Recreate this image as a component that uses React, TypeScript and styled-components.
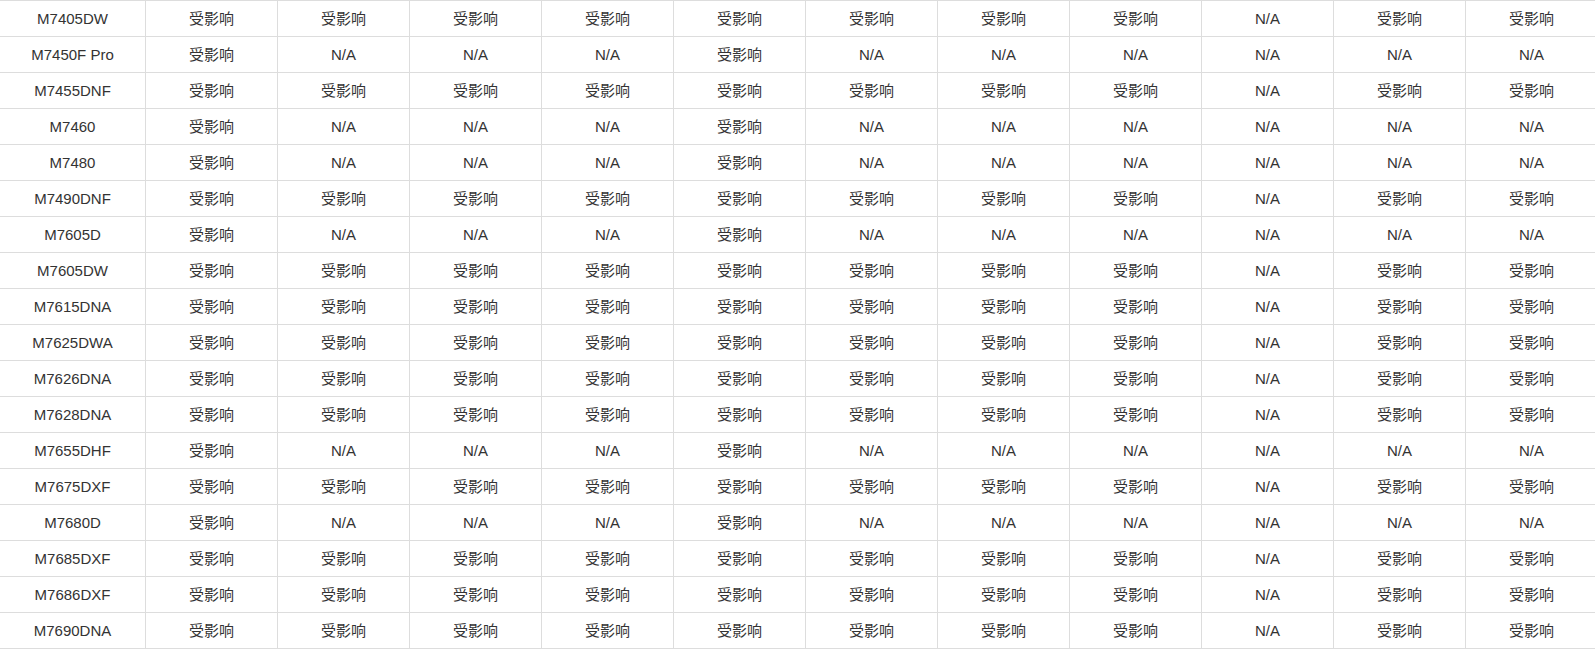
import React from "react";
import styled, { createGlobalStyle } from "styled-components";

const GlobalStyle = createGlobalStyle`
  html, body {
    margin: 0;
    padding: 0;
    background: #ffffff;
    overflow: hidden;
  }
  body {
    font-family: "Liberation Sans", Arial, "Noto Sans CJK SC", sans-serif;
  }
`;

const Table = styled.div`
  display: flex;
  flex-direction: column;
  width: 1598px;
  border-top: 1px solid #dddddd;
`;

const Row = styled.div`
  display: grid;
  grid-template-columns: 146px repeat(11, 132px);
`;

const Cell = styled.div<{ $model?: boolean }>`
  box-sizing: border-box;
  height: 36px;
  border-right: 1px solid #dddddd;
  border-bottom: 1px solid #dddddd;
  display: flex;
  align-items: center;
  justify-content: center;
  font-size: 15px;
  line-height: 20px;
  color: #333333;
  font-family: "Liberation Sans", Arial, "Noto Sans CJK SC", sans-serif;
  white-space: nowrap;
  padding-bottom: 0;
`;

const Y = "受影响";
const N = "N/A";
const A = [Y, Y, Y, Y, Y, Y, Y, Y, N, Y, Y];
const B = [Y, N, N, N, Y, N, N, N, N, N, N];

const rows: [string, string[]][] = [
  ["M7405DW", A],
  ["M7450F Pro", B],
  ["M7455DNF", A],
  ["M7460", B],
  ["M7480", B],
  ["M7490DNF", A],
  ["M7605D", B],
  ["M7605DW", A],
  ["M7615DNA", A],
  ["M7625DWA", A],
  ["M7626DNA", A],
  ["M7628DNA", A],
  ["M7655DHF", B],
  ["M7675DXF", A],
  ["M7680D", B],
  ["M7685DXF", A],
  ["M7686DXF", A],
  ["M7690DNA", A],
];

export default function App() {
  return (
    <>
      <GlobalStyle />
      <Table>
        {rows.map(([model, vals]) => (
          <Row key={model}>
            <Cell $model>{model}</Cell>
            {vals.map((v, i) => (
              <Cell key={i}>{v}</Cell>
            ))}
          </Row>
        ))}
      </Table>
    </>
  );
}
